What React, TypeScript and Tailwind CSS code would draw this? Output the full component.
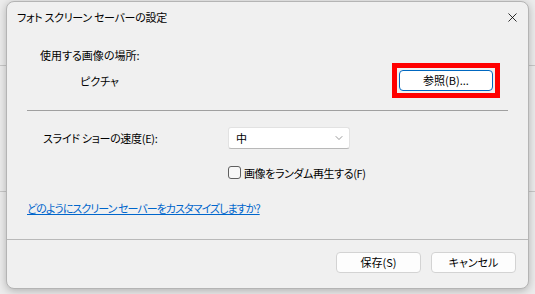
import { ChevronDown, X } from "lucide-react";

const font = "font-['Noto_Sans_CJK_JP','Noto_Sans',sans-serif] [font-feature-settings:'palt']";

function Button({ label, focused }: { label: string; focused?: boolean }) {
  return (
    <button
      className={
        focused
          ? "w-[94px] h-[21px] bg-white border border-[#0067c0] rounded-[4px] text-[11px] text-black leading-none"
          : "w-[85px] h-[21px] bg-[#fdfdfd] border border-[#d3d3d3] rounded-[4px] text-[11px] text-black leading-none"
      }
    >
      {label}
    </button>
  );
}

export default function App() {
  return (
    <div className={`relative w-[535px] h-[294px] overflow-hidden bg-[#dadada] ${font}`}>
      {/* window behind the dialog */}
      <div className="absolute inset-0 bg-[#ececec]">
        <div className="h-[66px] border-b border-[#c8c8c8]" />
        <div className="h-[126px] border-b border-[#c8c8c8]" />
      </div>

      {/* dialog */}
      <div className="absolute left-[6px] top-[1px] w-[523px] h-[288px] flex flex-col bg-[#f0f0f0] border border-[#b4b4b4] rounded-[8px] shadow-[0_2px_8px_rgba(0,0,0,0.25)] text-[11px] text-black">
        <div className="h-[31px] flex items-center justify-between pl-[10px] pr-[8px]">
          <span className="text-[11px] tracking-[-0.3px]">フォト スクリーン セーバーの設定</span>
          <X size={15} strokeWidth={1.3} className="text-black" />
        </div>

        <div className="pl-[33px] mt-[14px] leading-[16px]">使用する画像の場所:</div>

        <div className="flex items-center h-[35px] pl-[73px]">
          <span className="leading-[16px]">ピクチャ</span>
          <div className="ml-auto mr-[28px] border-[5px] border-[#ff0000] p-[2px]">
            <Button label="参照(B)..." focused />
          </div>
        </div>

        <div className="mx-[20px] mt-[12px] border-t border-[#a0a0a0]" />

        <div className="flex items-center mt-[16px] pl-[36px]">
          <span className="w-[185px] leading-[16px] tracking-[-0.3px]">スライド ショーの速度(E):</span>
          <div className="w-[122px] h-[22px] flex items-center justify-between bg-white border border-[#e2e2e2] border-b-[#b8b8b8] rounded-[3px] pl-[7px] pr-[4px]">
            <span>中</span>
            <ChevronDown size={12} strokeWidth={1.2} className="text-[#555]" />
          </div>
        </div>

        <div className="flex items-center h-[17px] mt-[15px] pl-[221px] gap-[3px]">
          <span className="w-[13px] h-[13px] border border-[#5f5f5f] rounded-[3px] bg-[#f7f7f7]" />
          <span className="leading-[16px] tracking-[-0.4px]">画像をランダム再生する(F)</span>
        </div>

        <div className="pl-[20px] mt-[19px] leading-[16px]">
          <span className="text-[#0066cc] underline tracking-[-0.95px]">どのようにスクリーン セーバーをカスタマイズしますか?</span>
        </div>

        <div className="flex-1" />

        <div className="h-[49px] border-t border-[#b9b9b9] flex justify-end items-start pt-[12px] pr-[12px] gap-[10px]">
          <Button label="保存(S)" />
          <Button label="キャンセル" />
        </div>
      </div>
    </div>
  );
}
